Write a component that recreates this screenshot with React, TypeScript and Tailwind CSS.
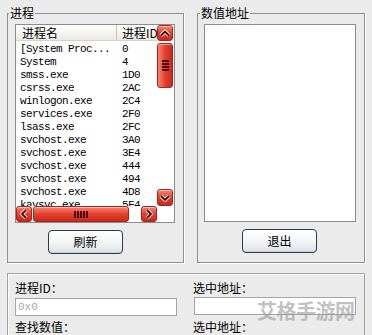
import React from "react";

const rows: [string, string][] = [
  ["[System Proc...", "0"],
  ["System", "4"],
  ["smss.exe", "1D0"],
  ["csrss.exe", "2AC"],
  ["winlogon.exe", "2C4"],
  ["services.exe", "2F0"],
  ["lsass.exe", "2FC"],
  ["svchost.exe", "3A0"],
  ["svchost.exe", "3E4"],
  ["svchost.exe", "444"],
  ["svchost.exe", "494"],
  ["svchost.exe", "4D8"],
  ["kavsvc.exe", "5F4"],
];

const Chevron = ({ dir }: { dir: "up" | "down" | "left" | "right" }) => {
  const d = {
    up: "M3 9.5 L7 5.5 L11 9.5",
    down: "M3 5 L7 9 L11 5",
    left: "M9 3 L5 7 L9 11",
    right: "M5 3 L9 7 L5 11",
  }[dir];
  return (
    <svg width="14" height="14" viewBox="0 0 14 14">
      <path d={d} fill="none" stroke="#fff" strokeWidth="3.6" strokeLinejoin="round" />
      <path d={d} fill="none" stroke="#3d0602" strokeWidth="1.8" />
    </svg>
  );
};

const RedBtn = ({ className, children }: { className: string; children?: React.ReactNode }) => (
  <div
    className={`flex items-center justify-center rounded-[3px] border border-[#a3261b] bg-gradient-to-b from-[#f7826f] via-[#e6402e] to-[#c9291c] shadow-[inset_0_1px_0_rgba(255,255,255,0.5)] ${className}`}
  >
    {children}
  </div>
);

const WinButton = ({ label, className }: { label: string; className: string }) => (
  <button
    className={`h-[24px] w-[75px] rounded-[4px] border border-[#2f3b48] bg-gradient-to-b from-white via-[#f4f5f6] to-[#dde2e8] text-[12px] leading-none shadow-[inset_0_-1px_0_#c9cfd6] ${className}`}
  >
    {label}
  </button>
);

export default function App() {
  return (
    <div className="relative h-[335px] w-[372px] overflow-hidden bg-[#ebebeb] font-['Noto_Sans_CJK_SC',sans-serif] text-[12px] text-black">
      <div className="flex items-start gap-[13px] pl-[7px] pt-[5px]">
        {/* 进程 */}
        <fieldset className="w-[177px] border border-[#8f8f8f] shadow-[1px_1px_0_#fff]">
          <legend className="ml-[1px] px-[1px] leading-[16px]">进程</legend>
          <div className="flex flex-col items-start pb-[8px] pl-[7px] pt-[3px]">
            <div className="grid h-[199px] w-[160px] grid-cols-[141px_16px] grid-rows-[181px_16px] border border-[#8c8c8c] bg-white">
              <div className="overflow-hidden">
                <div className="flex h-[16px] border-b border-[#d6d3c8] bg-gradient-to-b from-white to-[#ebe9e2]">
                  <div className="w-[101px] shrink-0 border-r border-[#c6c3b8] pl-[6px] leading-[16px]">进程名</div>
                  <div className="whitespace-nowrap pl-[5px] leading-[16px]">进程ID</div>
                </div>
                <div className="pt-[2px] font-['Liberation_Mono',monospace] text-[11px] tracking-[-0.6px]">
                  {rows.map(([n, id], i) => (
                    <div key={i} className="flex h-[13px] items-center whitespace-nowrap">
                      <span className="w-[101px] shrink-0 pl-[4px]">{n}</span>
                      <span className="pl-[5px]">{id}</span>
                    </div>
                  ))}
                </div>
              </div>
              {/* vertical scrollbar */}
              <div className="flex flex-col">
                <RedBtn className="h-[16px] w-[16px]">
                  <Chevron dir="up" />
                </RedBtn>
                <RedBtn className="mt-[2px] h-[45px] w-[16px] flex-col gap-[1px] bg-gradient-to-r">
                  <div className="h-[2px] w-[7px] bg-[#4a0804]" />
                  <div className="h-[2px] w-[7px] bg-[#4a0804]" />
                  <div className="h-[2px] w-[7px] bg-[#4a0804]" />
                  <div className="h-[2px] w-[7px] bg-[#4a0804]" />
                </RedBtn>
                <div className="flex-1" />
                <RedBtn className="h-[17px] w-[16px]">
                  <Chevron dir="down" />
                </RedBtn>
              </div>
              {/* horizontal scrollbar */}
              <div className="flex">
                <RedBtn className="h-[16px] w-[16px]">
                  <Chevron dir="left" />
                </RedBtn>
                <RedBtn className="ml-[1px] h-[16px] w-[96px] gap-[1px]">
                  <div className="h-[7px] w-[2px] bg-[#4a0804]" />
                  <div className="h-[7px] w-[2px] bg-[#4a0804]" />
                  <div className="h-[7px] w-[2px] bg-[#4a0804]" />
                  <div className="h-[7px] w-[2px] bg-[#4a0804]" />
                  <div className="h-[7px] w-[2px] bg-[#4a0804]" />
                </RedBtn>
                <div className="flex-1" />
                <RedBtn className="h-[16px] w-[16px]">
                  <Chevron dir="right" />
                </RedBtn>
              </div>
              <div className="bg-white" />
            </div>
            <WinButton label="刷新" className="ml-[33px] mt-[7px]" />
          </div>
        </fieldset>

        {/* 数值地址 */}
        <fieldset className="w-[168px] border border-[#8f8f8f] shadow-[1px_1px_0_#fff]">
          <legend className="ml-[2px] px-[1px] leading-[16px]">数值地址</legend>
          <div className="flex flex-col items-start pb-[9px] pl-[6px] pt-[3px]">
            <div className="h-[198px] w-[152px] border border-[#8c8c8c] bg-white" />
            <WinButton label="退出" className="ml-[38px] mt-[7px]" />
          </div>
        </fieldset>
      </div>

      {/* bottom panel */}
      <div className="mx-[7px] mt-[10px] grid h-[70px] grid-cols-[170px_1fr] border-l border-r border-t border-[#a3a3a3] pl-[7px] pt-[7px] shadow-[inset_1px_1px_0_#fff]">
        <div>
          <div className="leading-[14px]">进程ID：</div>
          <input
            readOnly
            value="0x0"
            className="mt-[3px] h-[18px] w-[162px] border border-[#a5a5a5] bg-white px-[2px] font-['Liberation_Mono',monospace] text-[11px] text-[#a9a9a9] outline-none"
          />
          <div className="mt-[4px] leading-[14px]">查找数值：</div>
        </div>
        <div className="pl-[8px]">
          <div className="leading-[14px]">选中地址：</div>
          <input readOnly className="ml-[1px] mt-[2px] h-[18px] w-[162px] border border-[#a5a5a5] bg-white outline-none" />
          <div className="mt-[5px] leading-[14px]">选中地址：</div>
        </div>
      </div>

      {/* watermark */}
      <div className="pointer-events-none absolute left-[257px] top-[296px] text-[20px] font-bold tracking-[-0.5px] text-[#9a9a9a] opacity-60">
        艾格手游网
      </div>
    </div>
  );
}
